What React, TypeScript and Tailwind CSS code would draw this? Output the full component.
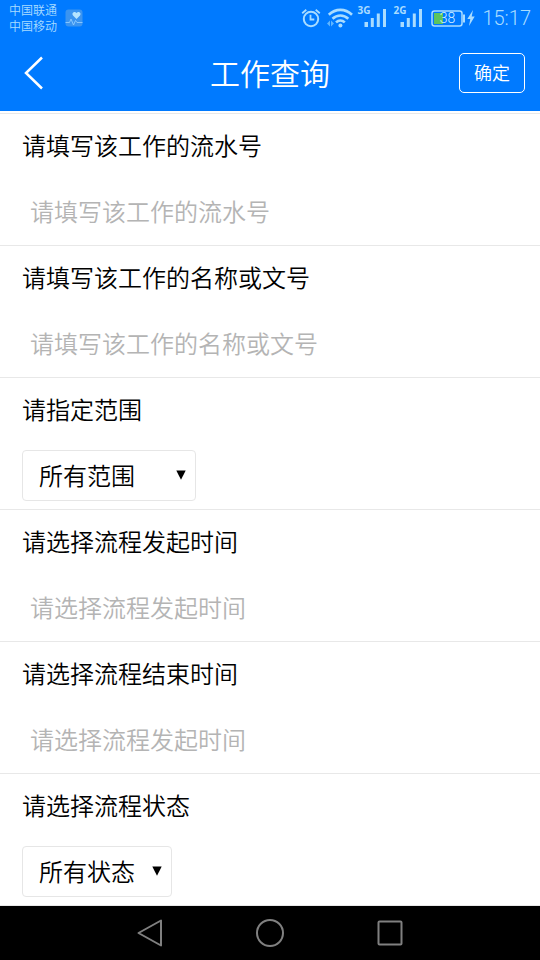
const inputFields = {
  serial: { id: "serial", label: "请填写该工作的流水号", placeholder: "请填写该工作的流水号" },
  name: { id: "name", label: "请填写该工作的名称或文号", placeholder: "请填写该工作的名称或文号" },
  start: { id: "start", label: "请选择流程发起时间", placeholder: "请选择流程发起时间" },
  end: { id: "end", label: "请选择流程结束时间", placeholder: "请选择流程发起时间" },
};

type InputField = { id: string; label: string; placeholder: string };

function InputRow({ field }: { field: InputField }) {
  return (
    <div className="border-b border-[#e8e8e8] px-[22px]">
      <label htmlFor={field.id} className="block h-[66px] text-2xl leading-[66px]">
        {field.label}
      </label>
      <input
        id={field.id}
        type="text"
        placeholder={field.placeholder}
        className="block h-[65px] w-full bg-transparent px-2 text-2xl font-[350] outline-none placeholder:text-[#b4b4b4]"
      />
    </div>
  );
}

type SelectRowProps = { id: string; label: string; options: string[]; width: string };

function SelectRow({ id, label, options, width }: SelectRowProps) {
  return (
    <div className="border-b border-[#e8e8e8] px-[22px]">
      <label htmlFor={id} className="block h-[66px] text-2xl leading-[66px]">
        {label}
      </label>
      <div className="flex h-[65px] items-end pb-2">
        <div className={`relative ${width}`}>
          <select
            id={id}
            className="block h-[51px] w-full appearance-none rounded border border-[#e6e6e6] bg-white pt-[2px] pl-4 text-2xl font-[350] outline-none"
          >
            {options.map((option) => (
              <option key={option}>{option}</option>
            ))}
          </select>
          <svg
            viewBox="0 0 10 10"
            className="pointer-events-none absolute top-5 right-[10px] h-[10px] w-[10px]"
            aria-hidden="true"
          >
            <path d="M0.3 0.5h9.4L5 9.8z" fill="#000" />
          </svg>
        </div>
      </div>
    </div>
  );
}

function SignalBars() {
  return (
    <svg width="23" height="20" viewBox="0 0 23 20" fill="currentColor" aria-hidden="true">
      <rect x="0.5" y="14" width="3.5" height="5" />
      <rect x="6.8" y="10" width="3" height="9" />
      <rect x="12.8" y="5.5" width="3" height="13.5" />
      <rect x="19" y="1" width="3" height="18" />
    </svg>
  );
}

function StatusBar() {
  return (
    <div className="flex h-9 items-center justify-between px-[9px] text-[#a9dcff]">
      <div className="flex items-center gap-2">
        <div className="pt-[2px] text-xs leading-4">
          <p>中国联通</p>
          <p>中国移动</p>
        </div>
        <svg width="18" height="18" viewBox="0 0 18 18" fill="none" aria-hidden="true">
          <rect x="0.5" y="0.5" width="17" height="17" rx="3" fill="#3b94f0" />
          <path d="M11.500 10 8 6.500C6.200 4 9.600 1.600 11.500 4c1.900-2.400 5.300 0 3.500 2.500z" fill="#b5e4ff" />
          <path
            d="M0.500 13.500h4l1.500-3.500 2.500 6 2-4.500 1.500 2h5.500"
            stroke="#8fcbff"
            strokeWidth="0.9"
          />
        </svg>
      </div>

      <div className="flex items-center">
        {/* Alarm */}
        <svg width="20" height="20" viewBox="0 0 20 20" fill="none" stroke="currentColor" aria-hidden="true">
          <circle cx="10" cy="11" r="7.200" strokeWidth="2" />
          <path d="M9.500 6.800v4.700h3.800M1.200 5.200 5.300 1.700M18.800 5.200l-4.100-3.500" strokeWidth="1.800" />
        </svg>
        {/* Wifi */}
        <svg
          width="26"
          height="20"
          viewBox="0 0 26 20"
          fill="none"
          stroke="currentColor"
          className="ml-[6px]"
          aria-hidden="true"
        >
          <path
            d="M1.800 6.800c6.800-6.600 16.400-6.600 23.200 0M5.500 10.800c4.700-4.500 11.100-4.500 15.800 0M9 14.400c2.600-2.500 6.200-2.500 8.800 0"
            strokeWidth="2.600"
          />
          <circle cx="13.400" cy="17.500" r="2" fill="currentColor" stroke="none" />
          <path d="M3 12.500v6L0 15.500zM4 12.500v6l3-3z" fill="#5fb5ff" stroke="none" />
        </svg>
        <div className="ml-1 flex items-center">
          <span className="-mr-[6px] self-start font-['Open_Sans',sans-serif] text-[10px] leading-[5px] font-bold">
            3G
          </span>
          <SignalBars />
        </div>
        <div className="ml-[6px] flex items-center">
          <span className="-mr-[6px] self-start font-['Open_Sans',sans-serif] text-[10px] leading-[5px] font-bold">
            2G
          </span>
          <SignalBars />
        </div>
        {/* Battery */}
        <div className="relative ml-2 flex h-[17px] w-[34px] items-center">
          <svg width="34" height="17" viewBox="0 0 34 17" fill="none" aria-hidden="true">
            <rect x="1" y="1" width="30" height="15" rx="2.500" stroke="#a9dcff" strokeWidth="1.500" />
            <rect x="3" y="3" width="9" height="11" fill="#5cc45c" />
            <path d="M33 4.500v8" stroke="#a9dcff" strokeWidth="2" />
          </svg>
          <span className="absolute inset-0 pr-[2px] text-center text-sm leading-[17px] text-[#d5f0ff]">38</span>
        </div>
        <svg width="8" height="16" viewBox="0 0 8 16" fill="currentColor" className="ml-[2px]" aria-hidden="true">
          <path d="M6 0 0.300 9h3L2 16l5.700-9.500H4.700z" />
        </svg>
        <time className="ml-[7px] text-[20px] leading-9">15:17</time>
      </div>
    </div>
  );
}

export default function App() {
  return (
    <div className="flex min-h-screen flex-col bg-white font-['Roboto','Noto_Sans_CJK_SC',sans-serif] font-[350] text-black">
      {/* Header */}
      <header className="bg-[#007aff] text-white">
        <StatusBar />
        <div className="grid h-[75px] grid-cols-[1fr_auto_1fr] items-center px-[15px] pb-[2px]">
          <button type="button" aria-label="返回" className="justify-self-start pl-2">
            <svg width="22" height="34" viewBox="0 0 22 34" fill="none" stroke="currentColor" strokeWidth="2.500">
              <path d="M19 1.500 3 17l16 15.500" />
            </svg>
          </button>
          <h1 className="pt-1 text-[30px] leading-9">工作查询</h1>
          <button
            type="button"
            className="h-10 w-[66px] justify-self-end rounded-[5px] border border-white pt-[2px] text-lg"
          >
            确定
          </button>
        </div>
      </header>

      {/* Query form */}
      <form className="mt-[2px] flex-1 border-t border-[#e8e8e8]">
        <InputRow field={inputFields.serial} />
        <InputRow field={inputFields.name} />
        <SelectRow id="scope" label="请指定范围" options={["所有范围"]} width="w-[174px]" />
        <InputRow field={inputFields.start} />
        <InputRow field={inputFields.end} />
        <SelectRow id="status" label="请选择流程状态" options={["所有状态"]} width="w-[150px]" />
      </form>

      {/* System navigation */}
      <nav className="flex h-[54px] items-center justify-center gap-[92px] bg-black text-[#808080]">
        <button type="button" aria-label="后退">
          <svg
            width="28"
            height="28"
            viewBox="0 0 28 28"
            fill="none"
            stroke="currentColor"
            strokeWidth="2"
            strokeLinejoin="round"
          >
            <path d="M25 1.500v25L2.500 14z" />
          </svg>
        </button>
        <button type="button" aria-label="主页">
          <svg width="28" height="28" viewBox="0 0 28 28" fill="none" stroke="currentColor" strokeWidth="2">
            <circle cx="14" cy="14" r="13" />
          </svg>
        </button>
        <button type="button" aria-label="最近任务">
          <svg width="28" height="28" viewBox="0 0 28 28" fill="none" stroke="currentColor" strokeWidth="2">
            <rect x="2.500" y="2.500" width="23" height="23" rx="1" />
          </svg>
        </button>
      </nav>
    </div>
  );
}
